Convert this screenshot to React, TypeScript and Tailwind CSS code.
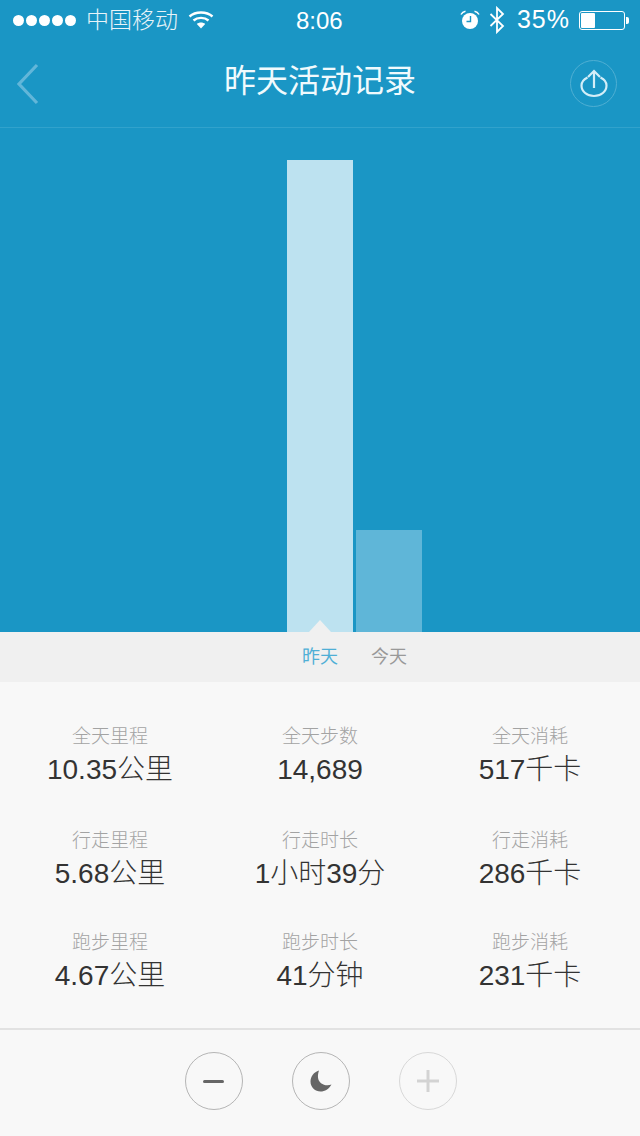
const font = { fontFamily: '"Liberation Sans","Noto Sans CJK SC",sans-serif' };

const rows = [
  [["全天里程", "10.35公里"], ["全天步数", "14,689"], ["全天消耗", "517千卡"]],
  [["行走里程", "5.68公里"], ["行走时长", "1小时39分"], ["行走消耗", "286千卡"]],
  [["跑步里程", "4.67公里"], ["跑步时长", "41分钟"], ["跑步消耗", "231千卡"]],
];

function Wifi() {
  return (
    <svg width="26" height="20" viewBox="0 0 26 20" fill="none" stroke="#fff" strokeWidth="2.4">
      <path d="M1.5 6.5C7.5 1.2 18.5 1.2 24.5 6.5" />
      <path d="M5.5 10.5C9.5 7 16.5 7 20.5 10.5" />
      <path d="M13 18.5L8.8 14C11 12 15 12 17.2 14Z" fill="#fff" stroke="none" />
    </svg>
  );
}

function Alarm() {
  return (
    <svg width="20" height="20" viewBox="0 0 20 20">
      <circle cx="10" cy="11" r="8" fill="#fff" />
      <path d="M1 4.5C2 2.5 3.5 1.5 5.5 1.2M19 4.5C18 2.5 16.5 1.5 14.5 1.2" stroke="#fff" strokeWidth="1.5" fill="none" />
      <path d="M10.5 6V11.5H6.5" stroke="#1a96c5" strokeWidth="1.4" fill="none" />
    </svg>
  );
}

function Bluetooth() {
  return (
    <svg width="16" height="28" viewBox="0 0 16 28" fill="none" stroke="#fff" strokeWidth="1.8">
      <path d="M1.5 8L14 20L8 26V2L14 8L1.5 20" />
    </svg>
  );
}

function Battery() {
  return (
    <div className="flex items-center">
      <div className="w-[46px] h-[19px] rounded-[3px] border border-white p-[1px] flex">
        <div className="w-[14px] bg-white rounded-[1px]" />
      </div>
      <div className="w-[3px] h-[7px] bg-white rounded-r-[2px] ml-[1px]" />
    </div>
  );
}

export default function App() {
  return (
    <div className="w-[640px] h-[1136px] flex flex-col overflow-hidden bg-[#f8f8f8]" style={font}>
      <div className="bg-[#1a96c5] h-[128px] flex flex-col border-b border-[#31a2cc] shrink-0">
        <div className="h-[40px] flex items-center justify-between pl-[13px] pr-[11px] text-white relative">
          <div className="flex items-center">
            <div className="flex gap-[2px]">
              {[0, 1, 2, 3, 4].map((i) => (
                <div key={i} className="w-[11px] h-[11px] rounded-full bg-white" />
              ))}
            </div>
            <span className="ml-[10px] text-[23px] font-light opacity-90">中国移动</span>
            <span className="ml-[10px] flex"><Wifi /></span>
          </div>
          <span className="absolute left-[296px] top-[6px] text-[24px] leading-[30px]">8:06</span>
          <div className="flex items-center">
            <Alarm />
            <span className="ml-[9px] flex"><Bluetooth /></span>
            <span className="ml-[12px] mr-[9px] text-[25px] tracking-[1px] font-light">35%</span>
            <Battery />
          </div>
        </div>
        <div className="flex-1 flex items-center justify-between pl-[14px] pr-[23px] relative">
          <svg width="28" height="44" viewBox="0 0 28 44" fill="none" stroke="#62b6d9" strokeWidth="3.2">
            <path d="M23 3L5 22L23 41" />
          </svg>
          <span className="absolute left-0 right-0 text-center text-[32px] leading-[40px] text-[#f0fafd] pb-[5px]">昨天活动记录</span>
          <div className="w-[47px] h-[47px] rounded-full border border-[#4fafd3] flex items-center justify-center mb-[1px]">
            <svg width="28" height="30" viewBox="0 0 28 30" fill="none" stroke="#d4eef8" strokeWidth="2.2">
              <path d="M14 20V3.5M8 9L14 3L20 9" />
              <path d="M7.5 9.5C3.5 11.5 1.5 14.5 1.5 17.5C1.5 23.5 7 28 14 28C21 28 26.5 23.5 26.5 17.5C26.5 14.5 24.5 11.5 20.5 9.5" />
            </svg>
          </div>
        </div>
      </div>

      <div className="h-[504px] bg-[#1a96c5] flex items-end pl-[287px] gap-[3px] relative shrink-0">
        <div className="w-[66px] h-[472px] bg-[#bde2f0]" />
        <div className="w-[66px] h-[102px] bg-[#5fb6d8]" />
        <div className="absolute left-[309px] bottom-0 w-0 h-0 border-x-[11px] border-x-transparent border-b-[12px] border-b-[#f0f0f0]" />
      </div>

      <div className="h-[50px] bg-[#f0f0f0] flex pl-[287px] gap-[3px] shrink-0">
        <div className="w-[66px] text-center text-[18px] leading-[50px] text-[#4fafd6]">昨天</div>
        <div className="w-[66px] text-center text-[18px] leading-[50px] text-[#999999]">今天</div>
      </div>

      <div className="h-[348px] pt-[40px] px-[5px] flex flex-col gap-[38px] border-b-2 border-[#e2e2e2] shrink-0">
        {rows.map((row, i) => (
          <div key={i} className={`grid grid-cols-3 ${i === 1 ? "-mb-[2px]" : ""}`}>
            {row.map(([label, value]) => (
              <div key={label} className="flex flex-col items-center">
                <span className="text-[19px] leading-[30px] text-[#a3a3a3] font-light">{label}</span>
                <span className="text-[28px] leading-[36px] text-[#333333] font-light">{value}</span>
              </div>
            ))}
          </div>
        ))}
      </div>

      <div className="flex-1 flex items-start justify-center pt-[22px] pl-[1px] gap-[49px]">
        <div className="w-[58px] h-[58px] rounded-full border border-[#b5b5b5] flex items-center justify-center">
          <div className="w-[21px] h-[3px] bg-[#666666] rounded-full" />
        </div>
        <div className="w-[58px] h-[58px] rounded-full border border-[#b5b5b5] flex items-center justify-center">
          <svg width="24" height="24" viewBox="0 0 24 24">
            <path d="M10 1.5C4.8 3 1.5 7.5 1.5 12.5C1.5 18.5 6.3 22.5 11.5 22.5C16 22.5 20 20 22.5 15.5C16.5 18 9.5 14.5 9 8.5C8.8 6 9.2 3.8 10 1.5Z" fill="#666666" />
          </svg>
        </div>
        <div className="w-[58px] h-[58px] rounded-full border border-[#d8d8d8] flex items-center justify-center">
          <svg width="22" height="22" viewBox="0 0 22 22" stroke="#d3d3d3" strokeWidth="3">
            <path d="M0 11H22M11 0V22" />
          </svg>
        </div>
      </div>
    </div>
  );
}
